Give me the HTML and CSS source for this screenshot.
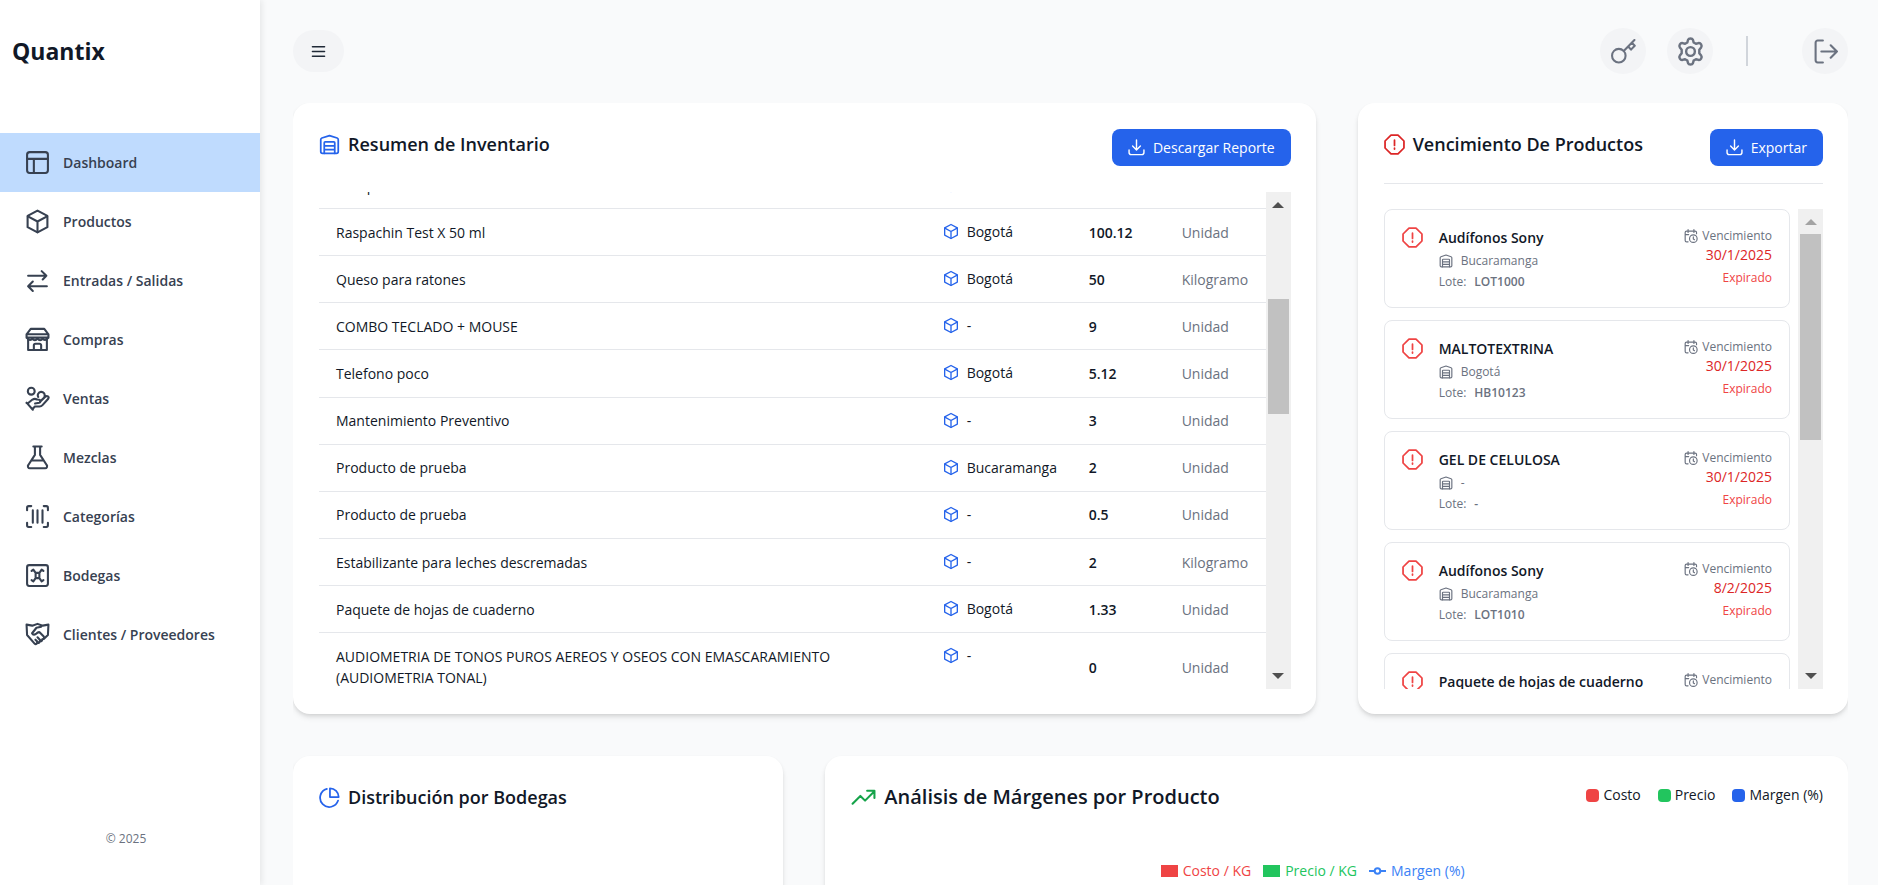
FILE: index.html
```html
<!DOCTYPE html>
<html lang="es">
<head>
    <meta charset="UTF-8">
    <meta name="viewport" content="width=device-width, initial-scale=1.0">
    <title>Quantix</title>
    <link rel="stylesheet" href="styles.css">
</head>
<body>
    <!-- Shared icons -->
    <svg class="sprite" aria-hidden="true">
        <symbol id="i-box" viewBox="0 0 24 24"><path d="M12 1.500 21.500 6.600v10.800L12 22.500 2.500 17.400V6.600Z"/><path d="M2.800 7 12 12l9.200-5M12 12v10.300"/></symbol>
        <symbol id="i-warehouse" viewBox="0 0 24 24"><path d="M4 22a2 2 0 0 1-2-2V6.500a2 2 0 0 1 1.300-1.900L12 1.800l8.700 2.800A2 2 0 0 1 22 6.500V20a2 2 0 0 1-2 2Z"/><path d="M6 22V10a1 1 0 0 1 1-1h10a1 1 0 0 1 1 1v12M6 13.500h12M6 17.800h12"/></symbol>
        <symbol id="i-alert" viewBox="0 0 24 24"><path d="M8 1.200h8L22.800 8v8L16 22.800H8L1.200 16V8Z"/><path d="M12 7v6M12 16.200v1"/></symbol>
        <symbol id="i-download" viewBox="0 0 24 24"><path d="M12 1.500V15M6.500 10l5.500 5.500 5.500-5.500M1.500 15.500V19a3 3 0 0 0 3 3h15a3 3 0 0 0 3-3v-3.500"/></symbol>
        <symbol id="i-calendar" viewBox="0 0 24 24"><path d="M21.500 8V6a2.500 2.500 0 0 0-2.500-2.500H4.500A2.500 2.500 0 0 0 2 6v13.500A2.500 2.500 0 0 0 4.500 22H7M7 1v5M17 1v5M2 9.500h6"/><circle cx="16" cy="16.500" r="6.500"/><path d="M16 13.500V17l2 1.300"/></symbol>
    </svg>

    <div class="layout">
        <aside class="sidebar">
            <h1 class="logo">Quantix</h1>
            <nav class="menu">
                <a class="menu-item active" href="#">
                    <svg class="icon" viewBox="0 0 24 24"><rect x="2" y="2" width="20" height="20" rx="2.500"/><path d="M2 8.500h20M8.500 8.500V22"/></svg>
                    <span>Dashboard</span>
                </a>
                <a class="menu-item" href="#">
                    <svg class="icon"><use href="#i-box"/></svg>
                    <span>Productos</span>
                </a>
                <a class="menu-item" href="#">
                    <svg class="icon" viewBox="0 0 24 24"><path d="M3 7.500h17.500M16 3l4.500 4.500L17 11M21 17.500H3.500M7.500 13l-4.500 4.500L7.500 22"/></svg>
                    <span>Entradas / Salidas</span>
                </a>
                <a class="menu-item" href="#">
                    <svg class="icon" viewBox="0 0 24 24"><path d="M5.500 1.800h13L22.500 7v3.200H1.500V7ZM1.500 7h21M3 11v11h18V11M8.500 22v-4.500A1.500 1.500 0 0 1 10 16h4a1.500 1.500 0 0 1 1.500 1.500V22"/><path d="M2 10.500c1.500 2.500 4 2.500 5 .5 1.500 2.200 3.500 2.200 5 0 1.500 2.200 3.500 2.200 5 0 1 2 3.500 2 5-.5"/></svg>
                    <span>Compras</span>
                </a>
                <a class="menu-item" href="#">
                    <svg class="icon" viewBox="0 0 24 24"><circle cx="6" cy="5" r="3.300"/><path d="M12.700 10.500A3.300 3.300 0 1 1 18.700 10M1.500 16.300 3 17M2.500 16.800 7.200 13c1.500-.9 3-.8 4.500 0l2 .2c1.600.3 1.500 2.600 0 2.900l-4 .7M14.500 15l5-4.800c1.800-1.300 4 .2 2.800 2l-5.500 6.200c-.8.900-1.500 1.300-2.800 1.300H9.500L7.300 22M1.500 16l6 6.800"/></svg>
                    <span>Ventas</span>
                </a>
                <a class="menu-item" href="#">
                    <svg class="icon" viewBox="0 0 24 24"><path d="M8 1.500h8M9.500 1.500v8L3.200 19.200A1.900 1.900 0 0 0 4.800 22.300h14.400a1.900 1.900 0 0 0 1.600-3.100L14.500 9.500v-8M6.500 14.800h11"/></svg>
                    <span>Mezclas</span>
                </a>
                <a class="menu-item" href="#">
                    <svg class="icon" viewBox="0 0 24 24"><path d="M6 2H3.500A1.500 1.500 0 0 0 2 3.500V6M18 2h2.500A1.500 1.500 0 0 1 22 3.500V6M6 22H3.500A1.500 1.500 0 0 1 2 20.500V18M18 22h2.500a1.500 1.500 0 0 0 1.500-1.500V18M7.500 6v12M12 6v12M16.800 6v12"/></svg>
                    <span>Categorías</span>
                </a>
                <a class="menu-item" href="#">
                    <svg class="icon" viewBox="0 0 24 24"><rect x="2" y="2" width="20" height="20" rx="2"/><path d="M6.300 7.500 8 6.300l2.200 3.200h3.600L16 6.300l1.700 1.200M6.300 16.500 8 17.700l2.200-3.200h3.600l2.200 3.200 1.700-1.200M10.200 9.500v5M13.800 9.500v5"/></svg>
                    <span>Bodegas</span>
                </a>
                <a class="menu-item" href="#">
                    <svg class="icon" viewBox="0 0 24 24"><path d="M1.500 2.500 7 3.500l5-1.700 5 1.700 5.500-1L22 12.500l-4 3.800M1.500 2.500 2 12.500l7.200 8.200c1 1 2.300.5 2.300-.8 1.500.7 2.800 0 2.700-1.500 1.500.4 2.600-.5 2.300-1.900 1.600 0 2.300-1.400 1.500-2.500l-4-4.200c-1.500-.3-2 .2-3 1.300-1.500 1.500-3.500 1.300-4.200-.3L11 5.500l4.500-1M12.500 19.500 10 17M14.700 17.500 12 14.700"/></svg>
                    <span>Clientes / Proveedores</span>
                </a>
            </nav>
            <footer class="copyright">© 2025</footer>
        </aside>

        <div class="main">
            <header class="topbar">
                <button class="menu-toggle" type="button" aria-label="Menú">
                    <svg class="icon-toggle" viewBox="0 0 16 16"><path d="M1.500 3h13M1.500 8h13M1.500 13h13"/></svg>
                </button>
                <div class="actions">
                    <button class="round" type="button" aria-label="Contraseña">
                        <svg class="icon" viewBox="0 0 24 24"><circle cx="7.500" cy="16" r="6.500"/><path d="M12.200 11.500 22.500 1M16.500 7.200l2.700 3 3.600-3.700L20 3.700"/></svg>
                    </button>
                    <button class="round" type="button" aria-label="Configuración">
                        <svg class="icon-gear" viewBox="0 0 24 24"><path d="M10 2.300c.6-1.500 3.400-1.500 4 0l.6 2.200 1.900 1.100 2.200-.6c1.700-.3 3.200 2.200 2.100 3.600L19.300 10.500v3l1.500 1.900c1.100 1.400-.4 3.900-2.100 3.600l-2.200-.6-1.900 1.100-.6 2.200c-.6 1.500-3.400 1.500-4 0l-.6-2.200-1.900-1.100-2.200.6c-1.700.3-3.200-2.200-2.100-3.600l1.500-1.900v-3L3.200 8.600C2.100 7.200 3.600 4.700 5.300 5l2.200.6 1.900-1.100Z"/><circle cx="12" cy="12" r="3.600"/></svg>
                    </button>
                    <span class="separator"></span>
                    <button class="round" type="button" aria-label="Cerrar sesión">
                        <svg class="icon" viewBox="0 0 24 24"><path d="M9.500 1.500h-5A2 2 0 0 0 2.500 3.500v17a2 2 0 0 0 2 2h5M8 12h15M17 6l6 6-6 6"/></svg>
                    </button>
                </div>
            </header>

            <main class="content">
                <section class="card wide">
                    <div class="card-header">
                        <h2 class="title"><svg class="icon-title blue"><use href="#i-warehouse"/></svg>Resumen de Inventario</h2>
                        <button class="primary" type="button"><svg class="icon-button"><use href="#i-download"/></svg>Descargar Reporte</button>
                    </div>
                    <div class="scroller">
                        <div class="viewport">
                            <table class="inventory">
                                <tbody>
                                    <tr>
                                        <td>Test prueba</td>
                                        <td class="place"><span><svg class="icon-cell"><use href="#i-box"/></svg>-</span></td>
                                        <td class="qty">1</td>
                                        <td class="unit">Unidad</td>
                                    </tr>
                                    <tr>
                                        <td>Raspachin Test X 50 ml</td>
                                        <td class="place"><span><svg class="icon-cell"><use href="#i-box"/></svg>Bogotá</span></td>
                                        <td class="qty">100.12</td>
                                        <td class="unit">Unidad</td>
                                    </tr>
                                    <tr>
                                        <td>Queso para ratones</td>
                                        <td class="place"><span><svg class="icon-cell"><use href="#i-box"/></svg>Bogotá</span></td>
                                        <td class="qty">50</td>
                                        <td class="unit">Kilogramo</td>
                                    </tr>
                                    <tr>
                                        <td>COMBO TECLADO + MOUSE</td>
                                        <td class="place"><span><svg class="icon-cell"><use href="#i-box"/></svg>-</span></td>
                                        <td class="qty">9</td>
                                        <td class="unit">Unidad</td>
                                    </tr>
                                    <tr>
                                        <td>Telefono poco</td>
                                        <td class="place"><span><svg class="icon-cell"><use href="#i-box"/></svg>Bogotá</span></td>
                                        <td class="qty">5.12</td>
                                        <td class="unit">Unidad</td>
                                    </tr>
                                    <tr>
                                        <td>Mantenimiento Preventivo</td>
                                        <td class="place"><span><svg class="icon-cell"><use href="#i-box"/></svg>-</span></td>
                                        <td class="qty">3</td>
                                        <td class="unit">Unidad</td>
                                    </tr>
                                    <tr>
                                        <td>Producto de prueba</td>
                                        <td class="place"><span><svg class="icon-cell"><use href="#i-box"/></svg>Bucaramanga</span></td>
                                        <td class="qty">2</td>
                                        <td class="unit">Unidad</td>
                                    </tr>
                                    <tr>
                                        <td>Producto de prueba</td>
                                        <td class="place"><span><svg class="icon-cell"><use href="#i-box"/></svg>-</span></td>
                                        <td class="qty">0.5</td>
                                        <td class="unit">Unidad</td>
                                    </tr>
                                    <tr>
                                        <td>Estabilizante para leches descremadas</td>
                                        <td class="place"><span><svg class="icon-cell"><use href="#i-box"/></svg>-</span></td>
                                        <td class="qty">2</td>
                                        <td class="unit">Kilogramo</td>
                                    </tr>
                                    <tr>
                                        <td>Paquete de hojas de cuaderno</td>
                                        <td class="place"><span><svg class="icon-cell"><use href="#i-box"/></svg>Bogotá</span></td>
                                        <td class="qty">1.33</td>
                                        <td class="unit">Unidad</td>
                                    </tr>
                                    <tr>
                                        <td>AUDIOMETRIA DE TONOS PUROS AEREOS Y OSEOS CON EMASCARAMIENTO (AUDIOMETRIA TONAL)</td>
                                        <td class="place"><span><svg class="icon-cell"><use href="#i-box"/></svg>-</span></td>
                                        <td class="qty">0</td>
                                        <td class="unit">Unidad</td>
                                    </tr>
                                </tbody>
                            </table>
                        </div>
                        <div class="scrollbar">
                            <i class="arrow up"></i>
                            <div class="track"><div class="thumb middle"></div></div>
                            <i class="arrow down"></i>
                        </div>
                    </div>
                </section>

                <section class="card">
                    <div class="card-header underlined">
                        <h2 class="title"><svg class="icon-title red"><use href="#i-alert"/></svg>Vencimiento De Productos</h2>
                        <button class="primary" type="button"><svg class="icon-button"><use href="#i-download"/></svg>Exportar</button>
                    </div>
                    <div class="scroller fill">
                        <ul class="viewport expirations">
                            <li class="expiration">
                                <svg class="icon-alert"><use href="#i-alert"/></svg>
                                <div class="info">
                                    <h3>Audífonos Sony</h3>
                                    <p><svg class="icon-small"><use href="#i-warehouse"/></svg>Bucaramanga</p>
                                    <p>Lote: <strong>LOT1000</strong></p>
                                </div>
                                <div class="due">
                                    <p><svg class="icon-small"><use href="#i-calendar"/></svg>Vencimiento</p>
                                    <p class="date">30/1/2025</p>
                                    <p class="expired">Expirado</p>
                                </div>
                            </li>
                            <li class="expiration">
                                <svg class="icon-alert"><use href="#i-alert"/></svg>
                                <div class="info">
                                    <h3>MALTOTEXTRINA</h3>
                                    <p><svg class="icon-small"><use href="#i-warehouse"/></svg>Bogotá</p>
                                    <p>Lote: <strong>HB10123</strong></p>
                                </div>
                                <div class="due">
                                    <p><svg class="icon-small"><use href="#i-calendar"/></svg>Vencimiento</p>
                                    <p class="date">30/1/2025</p>
                                    <p class="expired">Expirado</p>
                                </div>
                            </li>
                            <li class="expiration">
                                <svg class="icon-alert"><use href="#i-alert"/></svg>
                                <div class="info">
                                    <h3>GEL DE CELULOSA</h3>
                                    <p><svg class="icon-small"><use href="#i-warehouse"/></svg>-</p>
                                    <p>Lote: <strong>-</strong></p>
                                </div>
                                <div class="due">
                                    <p><svg class="icon-small"><use href="#i-calendar"/></svg>Vencimiento</p>
                                    <p class="date">30/1/2025</p>
                                    <p class="expired">Expirado</p>
                                </div>
                            </li>
                            <li class="expiration">
                                <svg class="icon-alert"><use href="#i-alert"/></svg>
                                <div class="info">
                                    <h3>Audífonos Sony</h3>
                                    <p><svg class="icon-small"><use href="#i-warehouse"/></svg>Bucaramanga</p>
                                    <p>Lote: <strong>LOT1010</strong></p>
                                </div>
                                <div class="due">
                                    <p><svg class="icon-small"><use href="#i-calendar"/></svg>Vencimiento</p>
                                    <p class="date">8/2/2025</p>
                                    <p class="expired">Expirado</p>
                                </div>
                            </li>
                            <li class="expiration">
                                <svg class="icon-alert"><use href="#i-alert"/></svg>
                                <div class="info">
                                    <h3>Paquete de hojas de cuaderno</h3>
                                </div>
                                <div class="due">
                                    <p><svg class="icon-small"><use href="#i-calendar"/></svg>Vencimiento</p>
                                </div>
                            </li>
                        </ul>
                        <div class="scrollbar">
                            <i class="arrow up disabled"></i>
                            <div class="track"><div class="thumb top"></div></div>
                            <i class="arrow down"></i>
                        </div>
                    </div>
                </section>

                <section class="card chart-card">
                    <h2 class="title">
                        <svg class="icon-title blue" viewBox="0 0 24 24"><path d="M9 2.200A10.500 10.500 0 1 0 21.800 15.500"/><path d="M12.500 1.500v10h10a10 10 0 0 0-10-10Z"/></svg>
                        Distribución por Bodegas
                    </h2>
                </section>

                <section class="card wide chart-card">
                    <div class="card-header">
                        <h2 class="title large">
                            <svg class="icon-title green" viewBox="0 0 24 24"><path d="M1.500 18 9 10.500l4.500 4.500L22.500 6M15.500 5.500h7v7"/></svg>
                            Análisis de Márgenes por Producto
                        </h2>
                        <ul class="legend">
                            <li><i class="swatch cost"></i>Costo</li>
                            <li><i class="swatch price"></i>Precio</li>
                            <li><i class="swatch margin"></i>Margen (%)</li>
                        </ul>
                    </div>
                    <ul class="chart-legend">
                        <li class="cost-label"><i class="bar cost"></i>Costo / KG</li>
                        <li class="price-label"><i class="bar price"></i>Precio / KG</li>
                        <li class="margin-label"><svg class="line-mark" viewBox="0 0 17 12"><path d="M0 6h5M12 6h5"/><circle cx="8.500" cy="6" r="2.800"/></svg>Margen (%)</li>
                    </ul>
                </section>
            </main>
        </div>
    </div>
</body>
</html>
```

FILE: styles.css
```css
* {
    box-sizing: border-box;
}
body {
    margin: 0;
    font-family: "Open Sans", "Noto Sans", sans-serif;
    font-size: 14px;
    line-height: 21px;
    color: #111827;
    background-color: #f9fafb;
}
h1, h2, h3, p, ul {
    margin: 0;
    padding: 0;
}
ul {
    list-style: none;
}
button {
    border: 0;
    font: inherit;
    cursor: pointer;
}
svg {
    flex: none;
    fill: none;
    stroke: currentColor;
    stroke-width: 2;
    stroke-linecap: round;
    stroke-linejoin: round;
}
.sprite {
    display: none;
}
.layout {
    display: flex;
    height: 100vh;
    overflow: hidden;
}

/* Sidebar */
.sidebar {
    display: flex;
    flex-direction: column;
    flex: none;
    width: 260px;
    background-color: #fff;
    box-shadow: 2px 0 6px rgba(0, 0, 0, 0.08);
}
.logo {
    height: 133px;
    padding: 34px 12px 0;
    font-size: 23px;
    line-height: 34px;
    font-weight: 700;
}
.menu-item {
    display: flex;
    align-items: center;
    gap: 13px;
    height: 59px;
    padding: 0 25px;
    color: #374151;
    font-weight: 600;
    text-decoration: none;
}
.menu-item.active {
    background-color: #bfdbfe;
}
.icon {
    width: 25px;
    height: 25px;
}
.icon-gear {
    width: 29px;
    height: 29px;
    stroke-width: 2;
}
.copyright {
    margin-top: auto;
    padding: 0 8px 36px 0;
    font-size: 12px;
    text-align: center;
    color: #6b7280;
}

/* Top bar */
.main {
    flex: 1;
    min-width: 0;
    padding: 28px 30px 0 33px;
}
.topbar {
    display: flex;
    align-items: center;
    justify-content: space-between;
    margin-bottom: 29px;
}
.menu-toggle {
    display: flex;
    align-items: center;
    justify-content: center;
    width: 51px;
    height: 42px;
    padding: 0;
    border-radius: 21px;
    background-color: #f3f4f6;
    color: #1f2937;
}
.icon-toggle {
    width: 15px;
    height: 15px;
    stroke-width: 1.5;
}
.actions {
    display: flex;
    align-items: center;
    gap: 21px;
}
.round {
    display: flex;
    align-items: center;
    justify-content: center;
    width: 46px;
    height: 46px;
    padding: 0;
    border-radius: 50%;
    background-color: #f3f4f6;
    color: #6b7280;
}
.separator {
    width: 2px;
    height: 30px;
    margin: 0 33px 0 12px;
    background-color: #d1d5db;
}

/* Cards */
.content {
    display: grid;
    grid-template-columns: repeat(3, minmax(0, 1fr));
    gap: 42px;
    overflow: hidden;
}
.card {
    display: flex;
    flex-direction: column;
    padding: 26px 25px 25px 26px;
    border-radius: 17px;
    background-color: #fff;
    box-shadow: 0 4px 6px -1px rgba(0, 0, 0, 0.1), 0 2px 4px -1px rgba(0, 0, 0, 0.1);
}
.wide {
    grid-column: span 2;
}
.chart-card {
    min-height: 420px;
}
.card-header {
    display: flex;
    align-items: flex-start;
    justify-content: space-between;
    margin-bottom: 26px;
}
.card-header.underlined {
    margin-bottom: 25px;
    padding-bottom: 17px;
    border-bottom: 1px solid #e5e7eb;
}
.title {
    display: flex;
    align-items: center;
    gap: 8px;
    font-size: 18px;
    line-height: 30px;
    font-weight: 600;
}
.title.large {
    font-size: 20px;
}
.icon-title {
    width: 21px;
    height: 21px;
}
.large .icon-title {
    width: 25px;
    height: 25px;
}
.blue {
    color: #2563eb;
}
.red {
    color: #dc2626;
}
.green {
    color: #16a34a;
}
.primary {
    display: flex;
    align-items: center;
    gap: 8px;
    height: 37px;
    padding: 0 16px;
    border-radius: 8px;
    background-color: #2563eb;
    color: #fff;
}
.icon-button {
    width: 17px;
    height: 17px;
}

/* Scroll areas */
.scroller {
    display: flex;
    height: 497px;
}
.scroller.fill {
    flex: 1;
    gap: 8px;
    height: auto;
    min-height: 0;
}
.viewport {
    flex: 1;
    min-width: 0;
    overflow: hidden;
}
.scrollbar {
    display: flex;
    flex-direction: column;
    align-items: center;
    flex: none;
    width: 25px;
    padding: 10px 2px;
    background-color: #f0f0f0;
}
.arrow {
    border: 6px solid transparent;
}
.arrow.up {
    border-top: 0;
    border-bottom-color: #505050;
}
.arrow.down {
    border-bottom: 0;
    border-top-color: #505050;
}
.arrow.disabled {
    border-bottom-color: #a3a3a3;
}
.track {
    flex: 1;
    width: 100%;
    padding: 9px 0;
}
.thumb {
    background-color: #c1c1c1;
}
.thumb.middle {
    height: 115px;
    margin-top: 82px;
}
.thumb.top {
    height: 206px;
}

/* Inventory table */
.inventory {
    width: 100%;
    height: 540px;
    margin-top: -30px;
    border-collapse: collapse;
    table-layout: fixed;
}
.inventory td {
    padding: 12px 17px 12px;
    border-bottom: 1px solid #e5e7eb;
}
.inventory .place {
    width: 146px;
    vertical-align: top;
    white-space: nowrap;
}
.place span {
    display: flex;
    align-items: center;
    gap: 8px;
}
.inventory .qty {
    width: 93px;
    font-weight: 600;
}
.inventory .unit {
    width: 101px;
    color: #6b7280;
}
.icon-cell {
    width: 16px;
    height: 17px;
    color: #2563eb;
}

/* Expirations */
.expirations {
    display: flex;
    flex-direction: column;
    gap: 12px;
    height: 480px;
}
.expiration {
    display: flex;
    flex: none;
    height: 99px;
    padding: 17px;
    border: 1px solid #e5e7eb;
    border-radius: 8px;
    font-size: 12px;
    color: #6b7280;
}
.icon-alert {
    width: 21px;
    height: 21px;
    color: #ef4444;
}
.info {
    flex: 1;
    margin-left: 16px;
}
.info h3 {
    margin-bottom: 2px;
    font-size: 14px;
    line-height: 21px;
    font-weight: 600;
    color: #111827;
}
.info p {
    display: flex;
    align-items: center;
    gap: 8px;
}
.info strong {
    font-weight: 600;
}
.due {
    text-align: right;
}
.due p {
    display: flex;
    align-items: center;
    justify-content: flex-end;
    gap: 4px;
    line-height: 18px;
}
.due .date {
    font-size: 14px;
    line-height: 20px;
    color: #dc2626;
}
.due .expired {
    padding-top: 4px;
    color: #ef4444;
}
.icon-small {
    width: 14px;
    height: 14px;
}

/* Chart legends */
.legend {
    display: flex;
    gap: 17px;
    line-height: 26px;
}
.legend li, .chart-legend li {
    display: flex;
    align-items: center;
    gap: 4px;
}
.swatch {
    width: 13px;
    height: 13px;
    border-radius: 4px;
}
.cost {
    background-color: #ef4444;
}
.price {
    background-color: #22c55e;
}
.margin {
    background-color: #2563eb;
}
.chart-legend {
    display: flex;
    justify-content: center;
    gap: 12px;
    padding: 22px 49px 0 0;
}
.chart-legend li {
    gap: 5px;
}
.bar {
    width: 17px;
    height: 12px;
}
.cost-label {
    color: #ef4444;
}
.price-label {
    color: #22c55e;
}
.margin-label {
    color: #3b82f6;
}
.line-mark {
    width: 17px;
    height: 12px;
}
```
